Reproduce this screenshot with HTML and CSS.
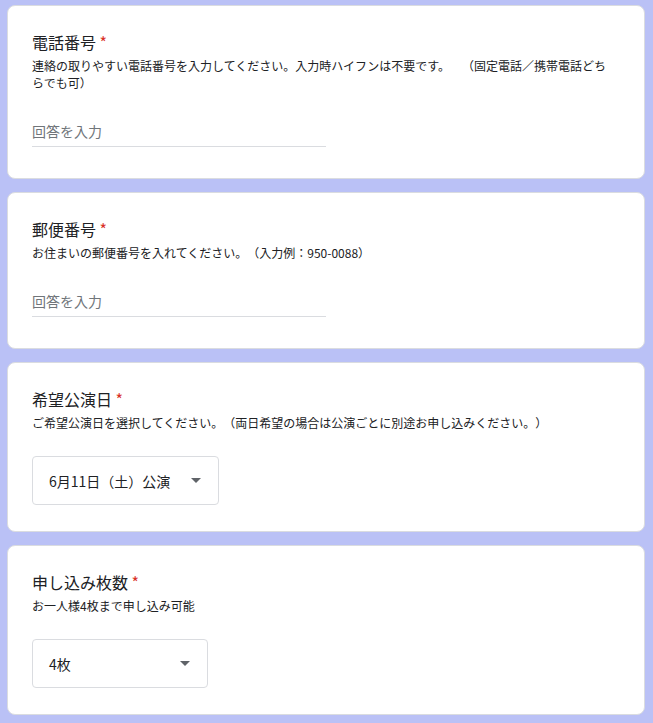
FILE: index.html
```html
<!DOCTYPE html>
<html lang="ja">
<head>
    <meta charset="UTF-8">
    <meta name="viewport" content="width=device-width, initial-scale=1.0">
    <title>お申し込みフォーム</title>
    <link rel="stylesheet" href="styles.css">
</head>
<body>
    <div class="form">
        <div class="card">
            <div class="question-title">電話番号 <span class="required">*</span></div>
            <div class="question-desc">連絡の取りやすい電話番号を入力してください。入力時ハイフンは不要です。　（固定電話／携帯電話どち<br>らでも可）</div>
            <input class="text-input" type="text" placeholder="回答を入力">
        </div>

        <div class="card">
            <div class="question-title">郵便番号 <span class="required">*</span></div>
            <div class="question-desc">お住まいの郵便番号を入れてください。（入力例：950-0088）</div>
            <input class="text-input" type="text" placeholder="回答を入力">
        </div>

        <div class="card card-select">
            <div class="question-title">希望公演日 <span class="required">*</span></div>
            <div class="question-desc">ご希望公演日を選択してください。（両日希望の場合は公演ごとに別途お申し込みください。）</div>
            <div class="dropdown" role="listbox">
                <span class="dropdown-value">6月11日（土）公演</span>
                <span class="dropdown-arrow"></span>
            </div>
        </div>

        <div class="card card-select">
            <div class="question-title">申し込み枚数 <span class="required">*</span></div>
            <div class="question-desc">お一人様4枚まで申し込み可能</div>
            <div class="dropdown" role="listbox">
                <span class="dropdown-value">4枚</span>
                <span class="dropdown-arrow"></span>
            </div>
        </div>
    </div>
</body>
</html>
```

FILE: styles.css
```css
body {
    font-family: "Noto Sans CJK JP", "Liberation Sans", sans-serif;
    background-color: #bac1f6;
    color: #202124;
    margin: 0;
    padding: 0;
    text-spacing-trim: space-all;
}
.form {
    padding: 5px 8px 8px 7px;
}
.card {
    background-color: white;
    border: 1px solid #dadce0;
    border-radius: 8px;
    padding: 24px 24px 31px 24px;
    margin-bottom: 13px;
}
.card:last-child {
    margin-bottom: 0;
}
.card-select {
    padding-bottom: 26px;
}
.question-title {
    font-size: 16px;
    line-height: 24px;
    letter-spacing: 0;
}
.required {
    color: #d93025;
}
.question-desc {
    font-size: 12px;
    line-height: 17px;
    margin-top: 3px;
}
.text-input {
    display: block;
    width: 50%;
    height: 30px;
    margin: 25px 0 0 0;
    padding: 0;
    border: none;
    border-bottom: 1px solid #dadce0;
    background: transparent;
    font-family: inherit;
    font-size: 14px;
    line-height: 30px;
    color: #202124;
    outline: none;
}
.text-input::placeholder {
    color: #70757a;
}
.dropdown {
    display: inline-flex;
    align-items: center;
    height: 47px;
    margin-top: 25px;
    padding: 0 10px 0 16px;
    border: 1px solid #dadce0;
    border-radius: 4px;
    font-size: 14px;
    vertical-align: top;
}
.dropdown-value {
    min-width: 110px;
    margin-right: 14px;
}
.dropdown-arrow {
    width: 24px;
    height: 24px;
    display: flex;
    align-items: center;
    justify-content: center;
}
.dropdown-arrow::after {
    content: "";
    border-left: 5px solid transparent;
    border-right: 5px solid transparent;
    border-top: 5px solid #5f6368;
}
```
